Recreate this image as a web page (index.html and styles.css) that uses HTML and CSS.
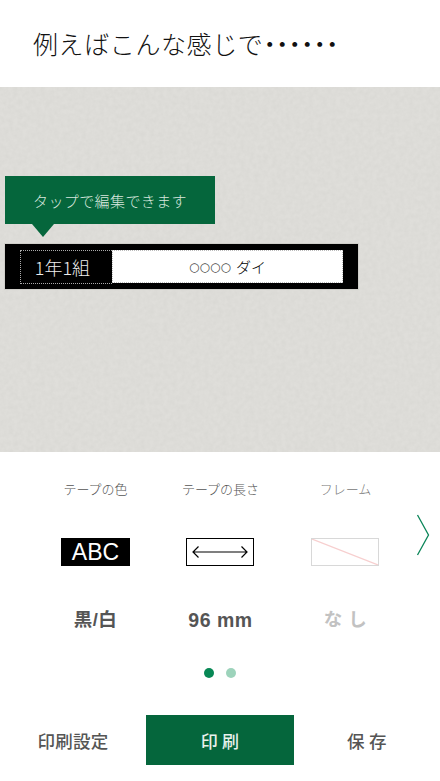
FILE: index.html
```html
<!DOCTYPE html>
<html lang="ja">
<head>
<meta charset="utf-8">
<title>例えばこんな感じで</title>
<link rel="stylesheet" href="styles.css">
</head>
<body>
<div class="app">
  <header class="head"><h1>例えばこんな感じで<span class="ellipsis">･･････</span></h1></header>
  <section class="canvas">
    <svg class="texture" width="440" height="365" aria-hidden="true">
      <filter id="paper"><feTurbulence type="fractalNoise" baseFrequency="0.22" numOctaves="3" seed="4"/><feColorMatrix values="0 0 0 0 0.55  0 0 0 0 0.55  0 0 0 0 0.52  0.32 0 0 0 -0.08"/></filter>
      <rect width="440" height="365" filter="url(#paper)"/>
    </svg>
    <div class="bubble">タップで編集できます</div>
    <div class="tape">
      <div class="tape-class">1年1組</div>
      <div class="tape-name"><span class="circles">○○○○</span><span>ダイ</span></div>
    </div>
  </section>
  <section class="options">
    <div class="option">
      <div class="opt-label">テープの色</div>
      <div class="thumb thumb-color">ABC</div>
      <div class="opt-value">黒/白</div>
    </div>
    <div class="option">
      <div class="opt-label">テープの長さ</div>
      <div class="thumb thumb-length">
        <svg width="56" height="14" viewBox="0 0 56 14"><path d="M1 7H55M6.500 1.500 1 7 6.500 12.500M49.500 1.500 55 7 49.500 12.500" fill="none" stroke="#000" stroke-width="1.200"/></svg>
      </div>
      <div class="opt-value opt-value-num">96 mm</div>
    </div>
    <div class="option option-off">
      <div class="opt-label">フレーム</div>
      <div class="thumb thumb-frame">
        <svg width="66" height="26" viewBox="0 0 66 26"><path d="M0 0 66 26" stroke="#f7cfcf" stroke-width="1.200"/></svg>
      </div>
      <div class="opt-value">な し</div>
    </div>
    <svg class="next" width="14" height="42" viewBox="0 0 14 42"><path d="M1.500 1 12.500 21 1.500 41" fill="none" stroke="#0a8558" stroke-width="1.300"/></svg>
  </section>
  <div class="dots"><span class="dot dot-on"></span><span class="dot"></span></div>
  <nav class="actions">
    <button class="act">印刷設定</button>
    <button class="act act-main">印 刷</button>
    <button class="act">保 存</button>
  </nav>
</div>
</body>
</html>
```
FILE: styles.css
```css
* { box-sizing: border-box; margin: 0; padding: 0; }
html, body { background: #fff; }
body { width: 440px; height: 781px; overflow: hidden; font-family: "Noto Sans CJK JP", "Liberation Sans", sans-serif; }
.app { width: 440px; height: 781px; display: flex; flex-direction: column; }

.head { height: 87px; display: flex; align-items: center; padding-left: 33px; }
.head h1 { font-size: 25px; font-weight: 300; color: #111; letter-spacing: 0.6px; line-height: 1; }
.ellipsis { font-weight: 700; letter-spacing: 0; }

.canvas { position: relative; height: 365px; background: #dfdeda; padding: 89px 0 0 5px; overflow: hidden; }
.texture { position: absolute; left: 0; top: 0; }
.bubble { position: relative; width: 210px; height: 48px; background: #05663c; color: #d8e6de; font-size: 15px; font-weight: 300; letter-spacing: 0.4px; display: flex; align-items: center; padding-left: 28px; }
.bubble::after { content: ""; position: absolute; left: 27px; top: 100%; border-style: solid; border-width: 13px 11px 0; border-color: #05663c transparent transparent; }
.tape { position: relative; width: 353px; height: 45px; margin-top: 20px; background: #000; outline: 1px solid #cfcec9; display: flex; align-items: center; padding-left: 15px; }
.tape-class { width: 92px; height: 34px; border: 1px dotted #aaa; border-right: 0; padding-right: 8px; color: #eee; font-size: 18px; font-weight: 300; display: flex; align-items: center; justify-content: center; }
.tape-name { width: 231px; height: 33px; background: #fff; border: 1px dotted #bbb; color: #000; font-size: 15px; font-weight: 300; display: flex; align-items: center; justify-content: center; gap: 5px; }
.circles { font-family: "DejaVu Sans", sans-serif; font-size: 12px; font-weight: 400; line-height: 1; color: #444; }

.options { position: relative; height: 201px; padding: 28px 0 0 33px; display: grid; grid-template-columns: repeat(3, 125px); }
.option { display: flex; flex-direction: column; align-items: center; }
.opt-label { height: 17px; font-size: 13px; line-height: 17px; font-weight: 300; color: #555; }
.thumb { margin-top: 41px; width: 69px; height: 28px; display: flex; align-items: center; justify-content: center; }
.thumb-color { background: #000; color: #fff; font-family: "Liberation Sans", sans-serif; font-size: 23px; }
.thumb-length { width: 68px; margin-right: 1px; border: 1.500px solid #000; }
.thumb-frame { width: 68px; margin-right: 1px; border: 1px solid #d8d8d8; }
.thumb-frame svg { display: block; }
.opt-value { margin-top: 42px; height: 24px; font-size: 18.500px; line-height: 24px; font-weight: 700; letter-spacing: 0.5px; color: #555; font-family: "Liberation Sans", "Noto Sans CJK JP", sans-serif; }
.opt-value-num { font-size: 19.500px; }
.option-off .opt-label { color: #777; }
.option-off .opt-value { color: #c2c2c2; }
.next { position: absolute; left: 416px; top: 62px; }

.dots { height: 10px; margin-top: 15px; display: flex; justify-content: center; gap: 12px; }
.dot { width: 10px; height: 10px; border-radius: 50%; background: #9dd3bb; }
.dot-on { background: #078855; }

.actions { margin-top: 37px; display: grid; grid-template-columns: 146px 148px 146px; height: 50px; }
.act { border: 0; background: #fff; color: #555; font-family: inherit; font-size: 17.500px; font-weight: 500; letter-spacing: 0.3px; }
.act-main { background: #05663c; color: #e9f1ed; font-size: 17px; }
```
